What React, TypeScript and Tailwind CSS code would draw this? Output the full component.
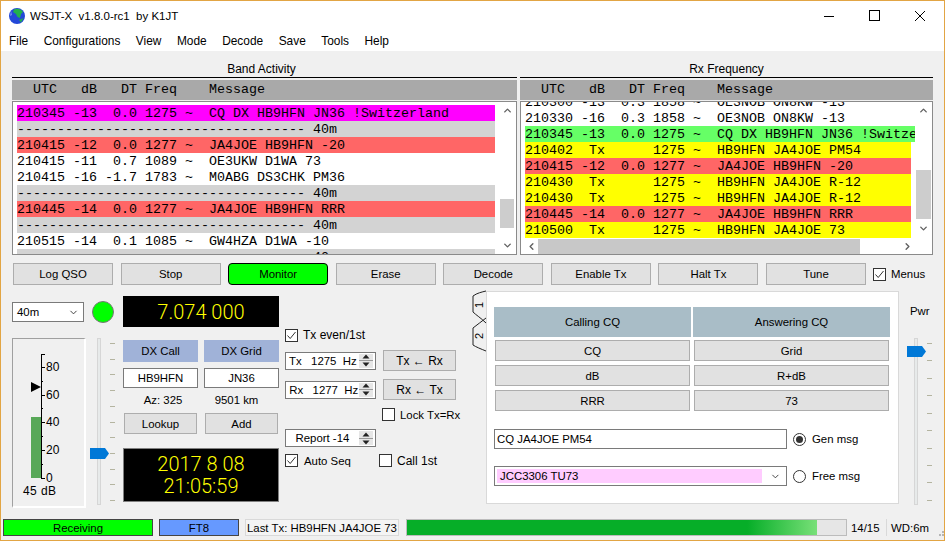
import { ChevronDown, ChevronLeft, ChevronRight, ChevronUp } from "lucide-react";

const leftRows = [
  { bg: "bg-[#ff00ff]", t: "210345 -13  0.0 1275 ~  CQ DX HB9HFN JN36 !Switzerland" },
  { bg: "bg-[#d3d3d3]", t: "------------------------------------ 40m" },
  { bg: "bg-[#ff6666]", t: "210415 -12  0.0 1277 ~  JA4JOE HB9HFN -20" },
  { bg: "bg-white", t: "210415 -11  0.7 1089 ~  OE3UKW D1WA 73" },
  { bg: "bg-white", t: "210415 -16 -1.7 1783 ~  M0ABG DS3CHK PM36" },
  { bg: "bg-[#d3d3d3]", t: "------------------------------------ 40m" },
  { bg: "bg-[#ff6666]", t: "210445 -14  0.0 1277 ~  JA4JOE HB9HFN RRR" },
  { bg: "bg-[#d3d3d3]", t: "------------------------------------ 40m" },
  { bg: "bg-white", t: "210515 -14  0.1 1085 ~  GW4HZA D1WA -10" },
  { bg: "bg-[#d3d3d3]", t: "------------------------------------ 40m" },
];

const rightRows = [
  { bg: "bg-white", w: "w-[386px]", t: "210300 -13  0.3 1858 ~  OE3NOB ON8KW -13" },
  { bg: "bg-white", w: "w-[386px]", t: "210330 -16  0.3 1858 ~  OE3NOB ON8KW -13" },
  { bg: "bg-[#66ff66]", w: "w-[390px]", t: "210345 -13  0.0 1275 ~  CQ DX HB9HFN JN36 !Switzerland" },
  { bg: "bg-[#ffff00]", w: "w-[386px]", t: "210402  Tx      1275 ~  HB9HFN JA4JOE PM54" },
  { bg: "bg-[#ff6666]", w: "w-[386px]", t: "210415 -12  0.0 1277 ~  JA4JOE HB9HFN -20" },
  { bg: "bg-[#ffff00]", w: "w-[386px]", t: "210430  Tx      1275 ~  HB9HFN JA4JOE R-12" },
  { bg: "bg-[#ffff00]", w: "w-[386px]", t: "210430  Tx      1275 ~  HB9HFN JA4JOE R-12" },
  { bg: "bg-[#ff6666]", w: "w-[386px]", t: "210445 -14  0.0 1277 ~  JA4JOE HB9HFN RRR" },
  { bg: "bg-[#ffff00]", w: "w-[386px]", t: "210500  Tx      1275 ~  HB9HFN JA4JOE 73" },
];

const menus = ["File", "Configurations", "View", "Mode", "Decode", "Save", "Tools", "Help"];
const actions = ["Log QSO", "Stop", "Monitor", "Erase", "Decode", "Enable Tx", "Halt Tx", "Tune"];

function Globe() {
  return (
    <svg width="16" height="16" viewBox="0 0 16 16" className="shrink-0">
      <circle cx="8" cy="8" r="8" fill="#2348d8" />
      <path d="M5 1.5 C8 0 12 1 14 4 L12 6 L11 10 L8.5 9 L7 6 L4 4 Z" fill="#22b14c" />
      <path d="M10 12 L14.5 10 L12 14.5 Z" fill="#22b14c" />
      <path d="M2 3 L3 7 L1 8 Z" fill="#7a90ee" />
    </svg>
  );
}

function WindowControls() {
  return (
    <svg width="102" height="12" viewBox="0 0 102 12" className="shrink-0 text-black">
      <path d="M0 6.5 H10" stroke="currentColor" />
      <rect x="45.5" y="0.5" width="10" height="10" fill="none" stroke="currentColor" />
      <path d="M91 1 L101 11 M101 1 L91 11" stroke="currentColor" />
    </svg>
  );
}

function Btn({ label, className }: { label: string; className: string }) {
  return (
    <div className={`flex items-center justify-center bg-[#e1e1e1] border border-[#adadad] text-black ${className}`}>
      {label}
    </div>
  );
}

function Check({ checked }: { checked?: boolean }) {
  return (
    <span className="flex h-[13px] w-[13px] shrink-0 items-center justify-center border border-[#333333] bg-white">
      {checked && (
        <svg width="11" height="11" viewBox="0 0 11 11">
          <path d="M1.5 5.5 L4.2 8.5 L9.5 2" fill="none" stroke="#333333" strokeWidth="1" />
        </svg>
      )}
    </span>
  );
}

function Radio({ on }: { on?: boolean }) {
  return (
    <span className="flex h-[13px] w-[13px] shrink-0 items-center justify-center rounded-full border border-[#333333] bg-white">
      {on && <span className="h-[7px] w-[7px] rounded-full bg-[#333333]" />}
    </span>
  );
}

function SpinArrows() {
  return (
    <span className="flex h-[14px] w-[14px] shrink-0 flex-col items-center justify-center gap-[1px] bg-[#e6e6e6]">
      <svg width="8" height="5" viewBox="0 0 8 5">
        <path d="M4 0.5 L7.5 4.5 H0.5 Z" fill="#222222" />
      </svg>
      <span className="h-px w-full bg-[#9a9a9a]" />
      <svg width="8" height="5" viewBox="0 0 8 5">
        <path d="M4 4.5 L7.5 0.5 H0.5 Z" fill="#222222" />
      </svg>
    </span>
  );
}

function Spin({ label, className }: { label: string; className: string }) {
  return (
    <div className={`flex h-[18px] w-[91px] items-center border border-[#7a7a7a] bg-white pr-[2px] ${className}`}>
      <span className="flex-1 whitespace-pre">{label}</span>
      <SpinArrows />
    </div>
  );
}

function ColumnHeader({ label, className }: { label: string; className: string }) {
  return <div className={`mb-[2px] box-content h-[15px] border-b border-black text-center leading-[15px] ${className}`}>{label}</div>;
}

function TickSlider({ ticks, handle }: { ticks: number[]; handle: number }) {
  // track, value handle and tick marks of a Qt vertical slider
  return (
    <svg width="26" height="167" viewBox="0 0 26 167" className="shrink-0">
      <rect x="7.5" y="0.5" width="3" height="166" fill="#e7eaea" stroke="#d6d6d6" />
      {ticks.map((y) => (
        <path key={y} d={`M20 ${y + 0.5} H25`} stroke="#b4b4a0" />
      ))}
      <path d={`M0 ${handle} H15 L19 ${handle + 5.5} L15 ${handle + 11} H0 Z`} fill="#0078d7" />
    </svg>
  );
}

function Meter() {
  const major = [
    { y: 139, l: "0" },
    { y: 111, l: "20" },
    { y: 83, l: "40" },
    { y: 56, l: "60" },
    { y: 28, l: "80" },
  ];
  const minor = [125, 97, 69, 42, 15];
  return (
    <svg width="71" height="167" viewBox="0 0 71 167" className="box-content -mb-[2px] -mr-[2px] shrink-0 border-b-2 border-l border-r-2 border-t border-[#a0a0a0] border-b-white border-r-white">
      <rect x="18" y="78" width="10" height="61" fill="#58a858" />
      <path d="M28.5 15 V139" stroke="black" />
      <path d="M28 15.5 H32" stroke="black" />
      {major.map((m) => (
        <g key={m.l}>
          <path d={`M28 ${m.y + 0.5} H32`} stroke="black" />
          <text x="33" y={m.y + 4} fontSize="12" fontFamily="'Liberation Sans', sans-serif" fill="black">
            {m.l}
          </text>
        </g>
      ))}
      {minor.map((y) => (
        <path key={y} d={`M28 ${y + 0.5} H30`} stroke="black" />
      ))}
      <path d="M18 43 L28 48 L18 53 Z" fill="black" />
      <text x="10" y="156" fontSize="12" letterSpacing="0.4" fontFamily="'Liberation Sans', sans-serif" fill="black">
        45 dB
      </text>
    </svg>
  );
}

function SideTabs() {
  return (
    <svg width="15" height="64" viewBox="0 0 15 64" className="mt-[-1px] shrink-0">
      <path d="M14 1 C10 2 5 3 1 6 V22 C4 25 9 28 14 33" fill="none" stroke="#222222" />
      <path d="M14 28 C10 31 5 35 1 38 V55 C4 57 9 59 14 61" fill="none" stroke="#222222" />
      <text transform="translate(11 15) rotate(-90)" fontSize="11" textAnchor="middle" fontFamily="'Liberation Sans', sans-serif" fill="black">
        1
      </text>
      <text transform="translate(11 46) rotate(-90)" fontSize="11" textAnchor="middle" fontFamily="'Liberation Sans', sans-serif" fill="black">
        2
      </text>
    </svg>
  );
}

export default function App() {
  return (
    <div className="h-[541px] w-[945px] overflow-hidden border border-[#e2a544] bg-[#f0f0f0] font-['Liberation_Sans',sans-serif] text-[11.4px] leading-[14px] text-black">
      {/* Title + menu */}
      <div className="bg-white">
        <div className="flex h-[30px] items-center pl-[8px] pr-[18px]">
          <Globe />
          <span className="ml-[5px] flex-1 whitespace-pre text-[11.5px]">WSJT-X  v1.8.0-rc1  by K1JT</span>
          <WindowControls />
        </div>
        <div className="flex h-[20px] items-center gap-[15.5px] pl-[8px] text-[11.9px]">
          {menus.map((m) => (
            <span key={m}>{m}</span>
          ))}
        </div>
      </div>

      {/* Decoded text panes */}
      <div className="flex gap-[3px] pl-[11px] pt-[11px] font-['Liberation_Mono',monospace] text-[13.33px]">
        <div className="w-[505px]">
          <div className="font-['Liberation_Sans',sans-serif] text-[12px]">
            <ColumnHeader label="Band Activity" className="pr-[6px]" />
          </div>
          <div className="h-[20px] bg-[#a9a9a9] whitespace-pre pl-[5px] leading-[20px]">{"  UTC   dB   DT Freq    Message"}</div>
          <div className="mt-px flex h-[154px] border border-[#8a8a8a] bg-white pl-[4px]">
            <div className="h-full w-[478px] overflow-hidden pt-[3px]">
              {leftRows.map((r, i) => (
                <div key={i} className={`h-[16px] overflow-hidden whitespace-pre leading-[18px] ${r.bg}`}>
                  {r.t}
                </div>
              ))}
            </div>
            <div className="ml-[5px] flex h-full w-[14px] flex-col items-center">
              <ChevronUp size={11} strokeWidth={3} className="mt-[3px] text-[#606060]" />
              <div className="mt-[83px] h-[29px] w-full bg-[#cdcdcd]" />
              <ChevronDown size={11} strokeWidth={3} className="mt-[12px] text-[#606060]" />
            </div>
          </div>
        </div>

        <div className="w-[413px]">
          <div className="font-['Liberation_Sans',sans-serif] text-[12px]">
            <ColumnHeader label="Rx Frequency" className="" />
          </div>
          <div className="h-[20px] bg-[#a9a9a9] whitespace-pre pl-[5px] leading-[20px]">{"  UTC   dB   DT Freq    Message"}</div>
          <div className="mt-px h-[154px] border border-[#8a8a8a] bg-white pl-[4px]">
            <div className="flex h-[136px]">
              <div className="h-full w-[390px] overflow-hidden">
                <div className="-mt-[8px]">
                  {rightRows.map((r, i) => (
                    <div key={i} className={`h-[16px] overflow-hidden whitespace-pre leading-[18px] ${r.w} ${r.bg}`}>
                      {r.t}
                    </div>
                  ))}
                </div>
              </div>
              <div className="ml-px flex h-full w-[15px] flex-col items-center">
                <ChevronUp size={11} strokeWidth={3} className="mt-[3px] text-[#606060]" />
                <div className="mt-[54px] h-[49px] w-full bg-[#cdcdcd]" />
                <ChevronDown size={11} strokeWidth={3} className="mt-[4px] text-[#606060]" />
              </div>
            </div>
            <div className="mt-px flex h-[15px] items-center">
              <ChevronLeft size={11} strokeWidth={3} className="ml-[1px] text-[#606060]" />
              <div className="ml-[1px] h-full w-[322px] bg-[#c8c8c8]" />
              <ChevronRight size={11} strokeWidth={3} className="ml-[42px] text-[#606060]" />
            </div>
          </div>
        </div>
      </div>

      {/* Action buttons */}
      <div className="mt-[8px] flex h-[22px] items-center pl-[12px]">
        <div className="flex w-[853px] gap-[7.5px]">
          {actions.map((a) =>
            a === "Monitor" ? (
              <div key={a} className="flex h-[22px] flex-1 items-center justify-center rounded-[4px] border border-black bg-[#00ff00]">
                {a}
              </div>
            ) : (
              <Btn key={a} label={a} className="h-[22px] flex-1" />
            )
          )}
        </div>
        <div className="ml-[7px] flex items-center gap-[5px]">
          <Check checked />
          <span>Menus</span>
        </div>
      </div>

      {/* Lower controls */}
      <div className="mt-[6px] flex h-[213px] pl-[11px]">
        <div className="w-[104px] shrink-0">
          <div className="mt-[10px] flex h-[22px] items-center">
            <div className="flex h-[20px] w-[72px] items-center justify-between border border-[#7a7a7a] bg-white px-[4px]">
              <span>40m</span>
              <ChevronDown size={11} className="text-[#333333]" />
            </div>
            <span className="ml-[8px] h-[22px] w-[22px] rounded-full border border-[#777777] bg-[#00ff00]" />
          </div>
          <div className="mt-[15px] flex">
            <Meter />
            <div className="ml-[6px]">
              <TickSlider ticks={[5, 21, 36, 52, 68, 84, 99, 115, 131, 146, 162]} handle={110} />
            </div>
          </div>
        </div>

        <div className="ml-[7px] w-[156px] shrink-0 pt-[5px]">
          <div className="flex h-[31px] items-center justify-center whitespace-pre bg-black font-['Roboto',sans-serif] text-[20px] font-light text-[#ffff00]">7.074 000</div>
          <div className="mt-[13px] flex gap-[6px]">
            <div className="flex h-[22px] w-[75px] items-center justify-center bg-[#a0b2d8]">DX Call</div>
            <div className="flex h-[22px] w-[75px] items-center justify-center bg-[#a0b2d8]">DX Grid</div>
          </div>
          <div className="mt-[6px] flex gap-[6px]">
            <div className="flex h-[20px] w-[75px] items-center justify-center border border-[#7a7a7a] bg-white">HB9HFN</div>
            <div className="flex h-[20px] w-[75px] items-center justify-center border border-[#7a7a7a] bg-white">JN36</div>
          </div>
          <div className="mt-[5px] flex h-[14px] gap-[6px] text-center">
            <span className="w-[75px] pl-[5px]">Az: 325</span>
            <span className="w-[75px] pr-[10px]">9501 km</span>
          </div>
          <div className="mt-[6px] flex justify-between px-[1px]">
            <Btn label="Lookup" className="h-[21px] w-[73px]" />
            <Btn label="Add" className="h-[21px] w-[73px]" />
          </div>
          <div className="mt-[14px] flex h-[54px] flex-col items-center justify-center border border-[#808080] bg-black font-['Roboto',sans-serif] text-[20px] font-light leading-[22px] text-[#ffff00]">
            <span>2017 8 08</span>
            <span>21:05:59</span>
          </div>
        </div>

        <div className="ml-[6px] w-[175px] shrink-0 pt-[37px]">
          <div className="flex h-[14px] items-center gap-[5px]">
            <Check checked />
            <span className="text-[12px]">Tx even/1st</span>
          </div>
          <div className="mt-[8px] flex h-[21px] items-center">
            <Spin label=" Tx   1275  Hz" className="" />
            <Btn label="Tx ← Rx" className="ml-[7px] h-[21px] w-[73px] text-[12px]" />
          </div>
          <div className="mt-[8px] flex h-[21px] items-center">
            <Spin label=" Rx   1277  Hz" className="" />
            <Btn label="Rx ← Tx" className="ml-[7px] h-[21px] w-[73px] text-[12px]" />
          </div>
          <div className="ml-[97px] mt-[8px] flex h-[13px] items-center gap-[5px]">
            <Check />
            <span className="whitespace-nowrap">Lock Tx=Rx</span>
          </div>
          <Spin label="   Report -14" className="mt-[8px]" />
          <div className="mt-[7px] flex h-[13px] items-center">
            <Check checked />
            <span className="ml-[6px] w-[75px]">Auto Seq</span>
            <Check />
            <span className="ml-[5px] text-[12px]">Call 1st</span>
          </div>
        </div>

        <div className="ml-[12px] flex shrink-0">
          <SideTabs />
          <div className="-ml-px h-[213px] w-[413px] border border-[#d9d9d9] bg-white pl-[7px] pt-[15px]">
            <div className="flex gap-[2px]">
              <div className="flex h-[30px] w-[197px] items-center justify-center bg-[#a9bdc7]">Calling CQ</div>
              <div className="flex h-[30px] w-[197px] items-center justify-center bg-[#a9bdc7]">Answering CQ</div>
            </div>
            <div className="mt-[3px] grid w-[396px] grid-cols-[195px_195px] gap-x-[4px] gap-y-[4px] pl-px">
              {["CQ", "Grid", "dB", "R+dB", "RRR", "73"].map((b) => (
                <Btn key={b} label={b} className="h-[21px]" />
              ))}
            </div>
            <div className="mt-[18px] flex h-[20px] items-center">
              <div className="flex h-[20px] w-[293px] items-center border border-[#7a7a7a] pl-[2px]">CQ JA4JOE PM54</div>
              <span className="ml-[6px]">
                <Radio on />
              </span>
              <span className="ml-[6px]">Gen msg</span>
            </div>
            <div className="mt-[17px] flex h-[20px] items-center">
              <div className="flex h-[20px] w-[293px] items-center border border-[#7a7a7a] pl-[2px] pr-[5px]">
                <span className="flex h-[14px] w-[271px] items-center bg-[#ffccff] pl-[3px]">JCC3306 TU73</span>
                <ChevronDown size={11} className="ml-[8px] text-[#333333]" />
              </div>
              <span className="ml-[6px]">
                <Radio />
              </span>
              <span className="ml-[6px]">Free msg</span>
            </div>
          </div>
        </div>

        <div className="ml-[8px] w-[26px] shrink-0 pt-[13px]">
          <div className="pl-[3px]">Pwr</div>
          <div className="mt-[20px]">
            <TickSlider ticks={[5, 22, 40, 57, 75, 92, 110, 127, 144, 162]} handle={8} />
          </div>
        </div>
      </div>

      {/* Status bar */}
      <div className="mt-[15px] flex h-[17px] items-stretch pl-[2px]">
        <div className="flex w-[150px] shrink-0 items-center justify-center border border-[#444444] bg-[#00ff00]">Receiving</div>
        <div className="ml-[6px] flex w-[80px] shrink-0 items-center justify-center border border-[#444444] bg-[#6699ff]">FT8</div>
        <div className="ml-[6px] flex w-[154px] shrink-0 items-center overflow-hidden whitespace-nowrap border border-[#d9d9d9] bg-[#f4f4f4] pl-px">Last Tx: HB9HFN JA4JOE 73</div>
        <div className="ml-[7px] w-[441px] shrink-0 border border-[#bcbcbc] bg-[#e6e6e6]">
          <div className="h-full w-[410px] bg-[linear-gradient(90deg,#06ae28_0%,#06ae28_83%,#78e078_100%)]" />
        </div>
        <span className="ml-[4px] flex w-[34px] shrink-0 items-center">14/15</span>
        <span className="ml-px flex shrink-0 items-center border-l border-[#d9d9d9] pl-[4px]">WD:6m</span>
        <svg width="8" height="8" viewBox="0 0 8 8" className="ml-[10px] mt-[9px] shrink-0">
          <path d="M6 0 H8 V2 H6 Z M3 3 H5 V5 H3 Z M6 3 H8 V5 H6 Z M0 6 H2 V8 H0 Z M3 6 H5 V8 H3 Z M6 6 H8 V8 H6 Z" fill="#b5b5b5" />
        </svg>
      </div>
    </div>
  );
}
